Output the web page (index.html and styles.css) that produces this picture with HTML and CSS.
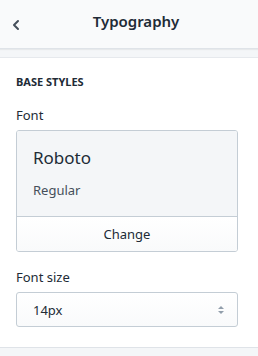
FILE: index.html
```html
<!DOCTYPE html>
<html lang="en">
    <head>
        <meta charset="UTF-8" />
        <meta name="viewport" content="width=device-width, initial-scale=1.0" />
        <title>Typography</title>
        <link rel="stylesheet" href="styles.css">
    </head>
    <body>
        <!--상단바-->
        <header class="topbar">
            <a href="#" class="back">
                <svg width="12" height="12" viewBox="0 0 12 12">
                    <path d="M8 2 L4 6 L8 10" fill="none" stroke="#454f5b" stroke-width="2" stroke-linecap="round" stroke-linejoin="round" />
                </svg>
            </a>
            <h1 class="title">Typography</h1>
        </header>

        <!--설정영역-->
        <section class="panel">
            <h2 class="heading">BASE STYLES</h2>

            <div class="field">
                <label class="label">Font</label>
                <div class="fontcard">
                    <div class="preview">
                        <p class="fname">Roboto</p>
                        <p class="fstyle">Regular</p>
                    </div>
                    <button class="change">Change</button>
                </div>
            </div>

            <div class="field">
                <label class="label">Font size</label>
                <div class="select">
                    <span>14px</span>
                    <svg width="8" height="12" viewBox="0 0 8 12">
                        <path d="M1 5 L4 2 L7 5 Z" fill="#919eab" />
                        <path d="M1 7 L4 10 L7 7 Z" fill="#919eab" />
                    </svg>
                </div>
            </div>
        </section>
    </body>
</html>
```
FILE: styles.css
```css
html,
body {
    margin: 0px;
    padding: 0px;
    height: 100%;
}

body {
    font-family: "Noto Sans", "Open Sans", sans-serif;
    color: #212b36;
    background: #f4f6f8;
}

/*상단바*/
.topbar {
    position: relative;
    height: 48px;
    background: #f9fafb;
    border-bottom: 1px solid #dfe3e8;
    box-shadow: 0 1px 1px rgba(0, 0, 0, 0.05);
    display: flex;
    align-items: center;
    justify-content: center;
}

.back {
    position: absolute;
    left: 10px;
    top: 14px;
    display: block;
    width: 12px;
    height: 12px;
}

.title {
    margin: 0px 0px 6px 14px;
    font-size: 15px;
    font-weight: 600;
}

/*설정영역*/
.panel {
    margin-top: 8px;
    background: #fff;
    border-top: 1px solid #e6e9ed;
    border-bottom: 1px solid #dfe3e8;
    padding: 16px 20px 20px 16px;
}

.heading {
    margin: 0px;
    font-size: 11px;
    font-weight: 700;
    line-height: 16px;
}

.field {
    margin-top: 15px;
}

.label {
    display: block;
    font-size: 13px;
    line-height: 20px;
    margin-bottom: 5px;
}

.fontcard {
    border: 1px solid #c4cdd5;
    border-radius: 3px;
    overflow: hidden;
}

.preview {
    background: #f4f6f8;
    padding: 15px 16px 16px 16px;
    border-bottom: 1px solid #c4cdd5;
}

.fname {
    margin: 0px;
    font-size: 17px;
    line-height: 24px;
}

.fstyle {
    margin: 10px 0px 0px;
    font-size: 13px;
    line-height: 20px;
    color: #454f5b;
}

.change {
    display: block;
    width: 100%;
    height: 34px;
    border: none;
    background: linear-gradient(#fff, #f9fafb);
    font-family: inherit;
    font-size: 13px;
    color: #212b36;
}

.select {
    height: 33px;
    border: 1px solid #c4cdd5;
    border-radius: 3px;
    background: linear-gradient(#fff, #f9fafb);
    display: flex;
    align-items: center;
    justify-content: space-between;
    padding: 0px 12px 0px 16px;
    font-size: 13px;
}
```
